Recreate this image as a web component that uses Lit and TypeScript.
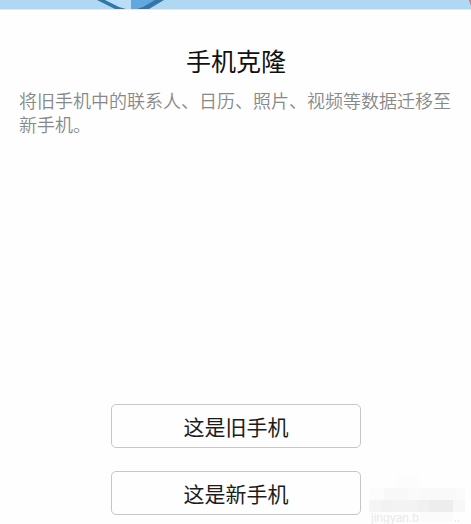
import { LitElement, html, css, svg } from "lit";
import { customElement } from "lit/decorators.js";

// Mosaic tiles: x, y, width, height, colour
const tiles: [number, number, number, number, string][] = [
  [36, 3, 24, 11, "#fcfcfc"],
  [9, 14, 15, 12, "#fcfcfc"],
  [24, 14, 24, 12, "#f8f8f8"],
  [48, 14, 12, 12, "#fafafa"],
  [60, 14, 36, 12, "#f9f9f9"],
  [96, 14, 9, 12, "#fbfbfb"],
  [9, 26, 12, 12, "#f5f5f5"],
  [21, 26, 12, 12, "#f2f2f2"],
  [33, 26, 24, 12, "#f3f3f3"],
  [57, 26, 12, 12, "#f1f1f1"],
  [69, 26, 24, 12, "#ededed"],
  [93, 26, 12, 12, "#f7f7f7"],
  [60, 38, 33, 10, "#fbfbfb"],
];

@customElement("app-root")
export class AppRoot extends LitElement {
  static styles = css`
    :host {
      display: block;
      font-family: "Noto Sans CJK SC", "Noto Sans", sans-serif;
      background: #fefefe;
    }
    .page {
      position: relative;
      display: flex;
      flex-direction: column;
      min-height: 100vh;
      overflow: hidden;
    }
    .banner {
      position: relative;
      height: 9px;
      background: #b0d8f3;
      border-bottom: 1px solid #d8ecf8;
    }
    .art {
      display: block;
      position: absolute;
      top: 0;
      left: 20%;
    }
    .edge {
      display: block;
      position: absolute;
      top: 0;
      right: 0;
    }
    .intro {
      padding: 30px 18px 0 19px;
    }
    h1 {
      margin: 0;
      font-size: 25px;
      line-height: 40px;
      font-weight: 400;
      text-align: center;
      color: #101010;
    }
    p {
      margin: 8px 0 0;
      font-size: 18px;
      line-height: 24px;
      font-weight: 350;
      color: #888888;
    }
    .actions {
      display: flex;
      flex-direction: column;
      align-items: center;
      gap: 23px;
      margin-top: auto;
      padding: 24px 0 9px 1px;
    }
    button {
      box-sizing: border-box;
      width: 53%;
      height: 44px;
      padding: 0;
      border: 1px solid #c6c6c6;
      border-radius: 5px;
      background: #fefefe;
      font: inherit;
      font-size: 21px;
      line-height: 30px;
      color: #1c1c1c;
    }
    .mark {
      position: absolute;
      right: 0;
      bottom: 0;
      display: block;
      font-family: "Liberation Sans", sans-serif;
    }
  `;

  render() {
    return html`
      <main class="page">
        <div class="banner">
          <svg class="art" width="76" height="9" viewBox="0 0 76 9" aria-hidden="true">
            <path d="M5 0L24 9H37V0Z" fill="#b9def5" />
            <path d="M37 0H68L51 9H37Z" fill="#62a8e0" />
            <path d="M3 0H11L25 7L32 9H21Z" fill="#3277aa" />
            <path d="M61 0H70L55 9H43L49 7Z" fill="#3277aa" />
          </svg>
          <svg class="edge" width="3" height="9" viewBox="0 0 3 9" aria-hidden="true">
            <path d="M1 0H3V6Z" fill="#c97884" />
          </svg>
        </div>
        <section class="intro">
          <h1>手机克隆</h1>
          <p>将旧手机中的联系人、日历、照片、视频等数据迁移至新手机。</p>
        </section>
        <div class="actions">
          <button type="button">这是旧手机</button>
          <button type="button">这是新手机</button>
        </div>
        <svg class="mark" width="111" height="50" viewBox="0 0 111 50" aria-hidden="true">
          <path d="M47 12Q52 8 57 12" fill="none" stroke="#eeeeee" stroke-width="2" />
          ${tiles.map(
            ([x, y, w, h, fill]) => svg`<rect x=${x} y=${y} width=${w} height=${h} fill=${fill} />`
          )}
          <text x="11" y="48" font-size="12" fill="#e9e9e9">jingyan.b</text>
          <path d="M95 47h1M98 47h1" stroke="#e9e9e9" stroke-width="2" />
        </svg>
      </main>
    `;
  }
}
